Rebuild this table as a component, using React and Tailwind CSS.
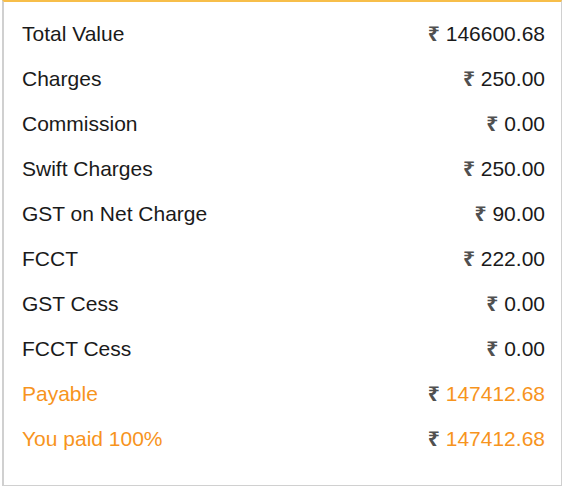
export default function App() {
  const rows = [
    ["Total Value", "146600.68"],
    ["Charges", "250.00"],
    ["Commission", "0.00"],
    ["Swift Charges", "250.00"],
    ["GST on Net Charge", "90.00"],
    ["FCCT", "222.00"],
    ["GST Cess", "0.00"],
    ["FCCT Cess", "0.00"],
  ];
  const hl = [
    ["Payable", "147412.68"],
    ["You paid 100%", "147412.68"],
  ];
  return (
    <div className="w-[563px] h-[500px] bg-white" style={{ fontFamily: '"Liberation Sans", Arial, sans-serif' }}>
      <div className="ml-[2px] w-[560px] h-[486px] border border-[#d0d0d0] border-l-2 border-t-2 border-t-[#f7be4a] pt-[9px] pl-[18px] pr-[16px]">
        {rows.map(([k, v]) => (
          <div key={k} className="flex items-center justify-between h-[45px] text-[21px] text-[#1a1a1a]">
            <span>{k}</span>
            <span><span className="text-[#505050] font-bold" style={{ fontFamily: '"Noto Sans", "DejaVu Sans", sans-serif' }}>₹</span> {v}</span>
          </div>
        ))}
        {hl.map(([k, v]) => (
          <div key={k} className="flex items-center justify-between h-[45px] text-[21px] text-[#f7941d]">
            <span>{k}</span>
            <span><span className="text-[#505050] font-bold" style={{ fontFamily: '"Noto Sans", "DejaVu Sans", sans-serif' }}>₹</span> {v}</span>
          </div>
        ))}
      </div>
    </div>
  );
}
